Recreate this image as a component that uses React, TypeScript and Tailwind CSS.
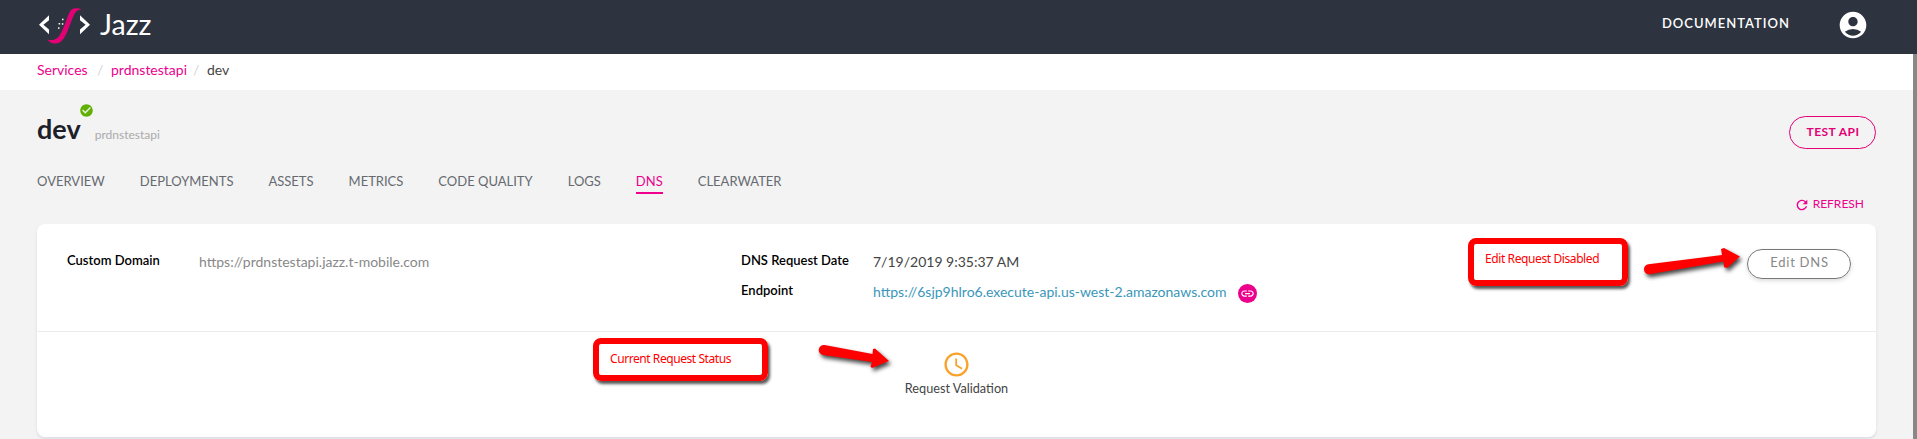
import React from "react";
import { MdAccountCircle, MdCheckCircle, MdRefresh, MdLink, MdAccessTime } from "react-icons/md";

const tabs = ["OVERVIEW", "DEPLOYMENTS", "ASSETS", "METRICS", "CODE QUALITY", "LOGS", "DNS", "CLEARWATER"];

function Logo() {
  return (
    <svg className="h-9 w-[52px] shrink-0" viewBox="0 0 52 36">
      <path d="M11 7.200v5L5.400 16.700 11 21.500v4.700L1 16.700z" fill="#fff" />
      <path d="M42 7.200v5l5.600 4.500-5.600 4.800v4.700l10-9.500z" fill="#fff" />
      <path d="M9.300 31.600C17 33.500 20.500 30 23.500 24L27.300 15.500C30.500 7 31.500 .2 37.500 .2c2.800 0 4.500.5 6.300 1.300C37.500 1.300 36 6.500 32.500 15.500L28.700 25C24.500 34 21.500 35.500 16 35.500c-3 0-5-1.700-6.700-3.900z" fill="#e20074" />
      <g fill="#fff">
        <rect x="24" y="10.700" width="1.500" height="1.500" />
        <rect x="20.600" y="15" width="1.500" height="1.500" />
        <rect x="23.800" y="15.200" width="1.500" height="1.500" />
        <rect x="20" y="19.300" width="1.500" height="1.500" />
      </g>
    </svg>
  );
}

function Header() {
  return (
    <header className="flex h-[54px] items-start bg-[#2d3440] text-white">
      <div className="flex pt-2 pl-[38px]">
        <Logo />
        <span className="-mt-px ml-2.5 text-[28.5px] leading-[34px]">Jazz</span>
      </div>
      <div className="ml-auto flex pr-[48px]">
        <span className="mt-[15px] text-[13px] leading-4 font-semibold tracking-[1px]">DOCUMENTATION</span>
        <MdAccountCircle className="mt-[9px] ml-[47px] size-8" />
      </div>
    </header>
  );
}

export default function App() {
  return (
    <div className="relative h-[439px] overflow-hidden bg-[#f3f3f3] font-[Lato,sans-serif] text-sm">
      <Header />
      <div className="flex">
        <main className="h-[385px] grow">
          <nav className="flex h-9 items-center bg-white pb-1 pl-[37px] leading-5">
            <span className="w-[60px] text-[#ec008c]">Services</span>
            <span className="w-3.5 text-[#d5d5d5]">/</span>
            <span className="w-[82px] text-[#ec008c]">prdnstestapi</span>
            <span className="w-3.5 text-[#d5d5d5]">/</span>
            <span className="text-[#444]">dev</span>
          </nav>
          <div className="flex h-[78px] pl-[37px]">
            <span className="mt-[23px] text-[27px] leading-8 font-bold text-[#1d2029]">dev</span>
            <MdCheckCircle className="mt-[13px] -ml-[2px] size-[15px] text-[#5fb000]" />
            <span className="mt-[37px] ml-px text-xs leading-4 text-[#aaa]">prdnstestapi</span>
            <button className="mt-[26px] mr-[37px] ml-auto h-[33px] w-[87px] rounded-full border border-[#e20074] pb-[2px] pl-px text-xs font-bold tracking-[.45px] text-[#e20074]">
              TEST API
            </button>
          </div>
          <div className="flex h-[26px] gap-[35px] pt-[3px] pl-[37px] text-[13px] text-[#666a70]">
            {tabs.map((t) => (
              <span
                key={t}
                className={t === "DNS" ? "h-[23px] border-b-2 border-[#ec008c] leading-5 text-[#ec008c]" : "h-[23px] leading-5"}
              >
                {t}
              </span>
            ))}
          </div>
          <div className="flex h-[30px] items-start justify-end pt-[2px] pr-[49px] text-xs text-[#ec008c]">
            <MdRefresh className="mt-px mr-[3px] size-4" />
            <span>REFRESH</span>
          </div>
          <section className="mr-[37px] ml-[37px] h-[213px] rounded-lg bg-white shadow-[0_2px_3px_#dcdce6]">
            <div className="flex h-[108px] border-b border-[#ebebeb]">
              <dl className="flex w-[674px] pl-[30px]">
                <dt className="mt-[26px] w-[132px] text-[13px] leading-5 font-semibold text-black">Custom Domain</dt>
                <dd className="mt-[28px] leading-5 text-[#888]">https://prdnstestapi.jazz.t-mobile.com</dd>
              </dl>
              <dl className="pl-[30px]">
                <div className="flex h-[57px]">
                  <dt className="mt-[26px] w-[132px] text-[13px] leading-5 font-semibold text-black">DNS Request Date</dt>
                  <dd className="mt-[28px] leading-5 text-[#444]">7/19/2019 9:35:37 AM</dd>
                </div>
                <div className="flex">
                  <dt className="-mt-px w-[132px] text-[13px] leading-5 font-semibold text-black">Endpoint</dt>
                  <dd className="mt-px flex leading-5 text-[#3a96ba]">
                    https://6sjp9hlro6.execute-api.us-west-2.amazonaws.com
                    <span className="mt-[2px] ml-[11px] flex size-[19px] items-center justify-center rounded-full bg-[#ec008c] text-white">
                      <MdLink className="size-[15px]" />
                    </span>
                  </dd>
                </div>
              </dl>
              <button className="mt-[25px] mr-[25px] ml-auto h-[30px] w-[104px] rounded-full border border-[#777] pb-[3px] pl-px text-[13px] tracking-[.75px] text-[#888] shadow-[0_2px_4px_#ddd]">
                Edit DNS
              </button>
            </div>
            <div className="flex flex-col items-center pt-[18px]">
              <MdAccessTime className="size-[29px] text-[#f9a22b]" />
              <span className="-mt-px text-[12.7px] leading-5 text-[#444]">Request Validation</span>
            </div>
          </section>
        </main>
        <div className="h-[385px] w-1 bg-[#888]" />
      </div>

      <div className="absolute top-[238px] left-[1468px] h-[48px] w-[160px] rounded-lg border-[6px] border-[#f00] pt-[7px] pl-[11px] font-['Noto_Sans',sans-serif] text-xs leading-4 tracking-[-.4px] text-[#f00] shadow-[2px_3px_3px_#000a]">
        Edit Request Disabled
      </div>
      <div className="absolute top-[338px] left-[593px] h-[43px] w-[175px] rounded-lg border-[6px] border-[#f00] pt-[7px] pl-[11px] font-['Noto_Sans',sans-serif] text-xs leading-4 tracking-[-.43px] text-[#f00] shadow-[2px_3px_3px_#000a]">
        Current Request Status
      </div>
      <svg className="absolute top-[240px] left-[1640px] h-10 w-[110px] drop-shadow-[2px_3px_2px_#000b]" viewBox="1640 240 110 40">
        <path d="M1648.500 264.300L1722 255 1721 249 1724 248 1740 256.500 1727 268 1724 267 1723.500 261.500 1649.500 274.300A5 5 0 0 1 1648.500 264.300z" fill="#f00" />
      </svg>
      <svg className="absolute top-[340px] left-[815px] h-9 w-20 drop-shadow-[2px_3px_2px_#000b]" viewBox="815 340 80 36">
        <path d="M824.500 345L872.500 354 873 349 875 348.500 889 361 872 368 870.500 366.500 872 362 823 355A5 5 0 0 1 824.500 345z" fill="#f00" />
      </svg>
    </div>
  );
}
